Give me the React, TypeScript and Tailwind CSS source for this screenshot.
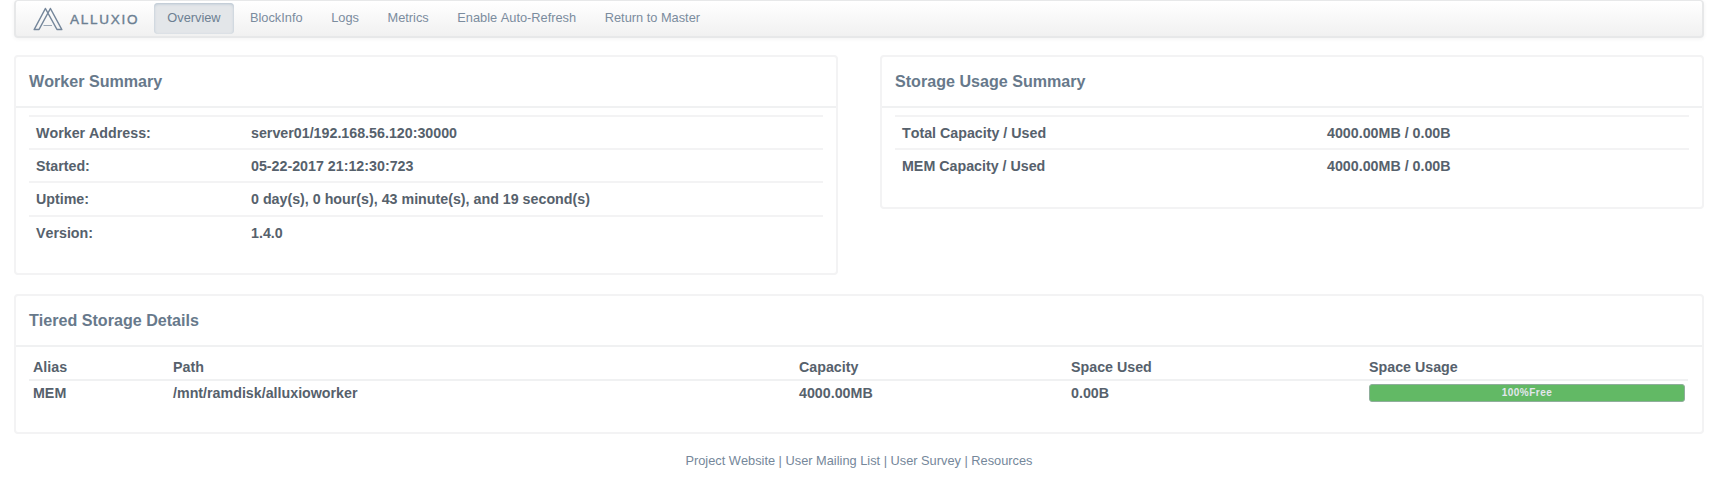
import type { ReactNode } from "react";

const navItems = ["Overview", "BlockInfo", "Logs", "Metrics", "Enable Auto-Refresh", "Return to Master"];

const workerRows = [
  ["Worker Address:", "server01/192.168.56.120:30000"],
  ["Started:", "05-22-2017 21:12:30:723"],
  ["Uptime:", "0 day(s), 0 hour(s), 43 minute(s), and 19 second(s)"],
  ["Version:", "1.4.0"],
];

const storageRows = [
  ["Total Capacity / Used", "4000.00MB / 0.00B"],
  ["MEM Capacity / Used", "4000.00MB / 0.00B"],
];

function Logo() {
  return (
    <a href="#" className="flex h-full items-center">
      <svg width="30" height="24" viewBox="0 0 30 24" fill="none" stroke="#74869a" strokeWidth="1.5" strokeLinejoin="round">
        <path d="M12.4 1.5 L1.2 22.5 H6 L17.4 1.5 L28.8 22.5 H24 L12.4 1.5 Z" />
        <path d="M10.5 18.5 H19" strokeWidth="1" opacity="0.7" />
      </svg>
      <span className="ml-[7px] mt-[3px] text-[13.5px] leading-none tracking-[1.75px] text-[#6c7f92] [-webkit-text-stroke:0.4px_#6c7f92]">ALLUXIO</span>
    </a>
  );
}

function Panel({ title, className, children }: { title: string; className: string; children: ReactNode }) {
  return (
    <section className={`rounded-[4px] border-2 border-[#f3f3f4] ${className}`}>
      <h2 className="flex h-[51px] items-center border-b-2 border-[#f0f1f2] pl-[13px] text-[16.1px] font-bold text-[#67798b]">
        {title}
      </h2>
      {children}
    </section>
  );
}

function SummaryTable({ rows, labelClass }: { rows: string[][]; labelClass: string }) {
  return (
    <dl className="mx-[13px] mt-[7px] font-bold">
      {rows.map(([label, value]) => (
        <div key={label} className="flex h-[33.2px] items-center border-t-2 border-[#f3f3f4] pl-[7px] pt-px">
          <dt className={labelClass}>{label}</dt>
          <dd>{value}</dd>
        </div>
      ))}
    </dl>
  );
}

export default function App() {
  return (
    <div className="h-[498px] overflow-hidden bg-white pl-[14px] pr-[21px] font-['Liberation_Sans',Arial,sans-serif] text-[14.25px] leading-none text-[#56616c] [font-kerning:none]">
      <nav className="flex h-[38px] items-center rounded-[4px] border-2 border-t border-[#e7e8e9] bg-linear-to-b from-white to-[#f1f1f1] pl-[17px] shadow-[0_1px_4px_rgba(0,0,0,0.05)]">
        <Logo />
        <ul className="ml-[15px] flex items-center text-[12.8px] text-[#7b8c9e]">
          {navItems.map((item, i) => (
            <li
              key={item}
              className={
                i === 0
                  ? "mr-[2px] flex h-[31px] items-center rounded-[4px] bg-[#e3e6e9] px-[13px] text-[#6c7f92] shadow-[inset_0_1px_3px_#b4c2cf]"
                  : "flex h-[31px] items-center px-[14.3px]"
              }
            >
              {item}
            </li>
          ))}
        </ul>
      </nav>

      <div className="mt-[17px] flex items-start justify-between">
        <Panel title="Worker Summary" className="h-[220px] w-[824px]">
          <SummaryTable rows={workerRows} labelClass="w-[215px]" />
        </Panel>
        <Panel title="Storage Usage Summary" className="h-[154px] w-[824px]">
          <SummaryTable rows={storageRows} labelClass="w-[425px]" />
        </Panel>
      </div>

      <Panel title="Tiered Storage Details" className="mt-[19px] h-[140px]">
        <table className="ml-[13px] w-[1659px] table-fixed border-collapse text-left font-bold">
          <colgroup>
            <col className="w-[140px]" />
            <col className="w-[626px]" />
            <col className="w-[272px]" />
            <col className="w-[298px]" />
            <col />
          </colgroup>
          <thead>
            <tr className="h-[33px] border-b-2 border-[#f0f1f2]">
              {["Alias", "Path", "Capacity", "Space Used", "Space Usage"].map((h) => (
                <th key={h} className="pb-0 pl-[4px] pt-[9px]">{h}</th>
              ))}
            </tr>
          </thead>
          <tbody>
            <tr className="h-[26px]">
              <td className="pl-[4px]">MEM</td>
              <td className="pl-[4px]">/mnt/ramdisk/alluxioworker</td>
              <td className="pl-[4px]">4000.00MB</td>
              <td className="pl-[4px]">0.00B</td>
              <td className="pb-px pl-[4px]">
                <div className="flex h-[18px] w-[316px] items-center justify-center rounded-[3px] border border-[#8fae9b] bg-[#62b965] text-[10px] tracking-[0.5px] text-[#e3e6ee]">
                  100%Free
                </div>
              </td>
            </tr>
          </tbody>
        </table>
      </Panel>

      <footer className="mt-[21px] flex justify-center text-[12.8px] text-[#75879a]">
        <span>Project Website | User Mailing List | User Survey | Resources</span>
      </footer>
    </div>
  );
}
